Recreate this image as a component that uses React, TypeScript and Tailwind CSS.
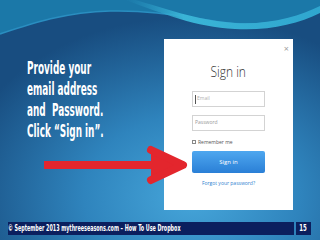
import React from "react";

function Background() {
  return (
    <svg className="absolute inset-0" width="320" height="240" viewBox="0 0 320 240">
      <defs>
        <radialGradient id="bg" cx="0.6" cy="0.82" r="0.75">
          <stop offset="0" stopColor="#46a6da" />
          <stop offset="0.45" stopColor="#2f84bd" />
          <stop offset="1" stopColor="#184d80" />
        </radialGradient>
        <linearGradient id="band" x1="0" y1="0" x2="1" y2="0">
          <stop offset="0" stopColor="#2a9cc8" stopOpacity="0" />
          <stop offset="0.3" stopColor="#3ab4d6" />
          <stop offset="1" stopColor="#2fa6cf" />
        </linearGradient>
      </defs>
      <rect width="320" height="240" fill="url(#bg)" />
      <path d="M0,0 H320 V8 C290,22 255,27 220,22 C180,16 150,10 110,11 C65,12 30,24 0,34 Z" fill="#1b78a8" />
      <path d="M0,34 C30,24 65,12 110,11 C150,10 180,16 220,22 C255,27 290,22 320,8" fill="none" stroke="#2a8ec0" strokeWidth="1.5" />
      <path d="M135,0 C165,8 195,20 235,23 C270,25 300,16 320,6 L320,13 C298,24 268,31 235,29 C195,27 165,14 125,0 Z" fill="url(#band)" />
    </svg>
  );
}

function Arrow() {
  return (
    <svg className="absolute left-0 top-0" width="320" height="240" viewBox="0 0 320 240">
      <line x1="44" y1="165" x2="172" y2="165" stroke="#e3262d" strokeWidth="8" />
      <polygon points="151,150 186,165 151,180" fill="#e3262d" />
      <polyline points="151,150 183,165 151,180" fill="none" stroke="#e3262d" strokeWidth="8" strokeLinecap="round" strokeLinejoin="round" />
    </svg>
  );
}

export default function App() {
  const cond = { fontFamily: '"DejaVu Sans Condensed", "DejaVu Sans", sans-serif' };
  return (
    <div className="relative w-[320px] h-[240px] overflow-hidden bg-[#1e5e90]">
      <Background />
      <div className="relative flex flex-col h-full">
        <div className="flex h-[222px]">
          <div className="w-[164px] pl-[27px] pt-[57px] text-white font-bold" style={cond}>
            <div className="origin-left scale-x-[0.55] whitespace-nowrap text-[18px] leading-[21px]">
              <div>Provide your</div>
              <div>email address</div>
              <div>and&nbsp; Password.</div>
              <div>Click “Sign in”.</div>
            </div>
          </div>
          <div
            className="relative mt-[39px] w-[129px] h-[171px] bg-white flex flex-col items-center"
            style={{ fontFamily: '"Open Sans", "Liberation Sans", sans-serif' }}
          >
            <div className="absolute top-[5px] right-[4px] text-[9px] leading-[10px] text-[#a0a0a0]">×</div>
            <div className="mt-[22px] h-[20px] text-[15px] leading-[20px] font-light text-[#333] origin-center scale-x-[0.8]">
              Sign in
            </div>
            <div className="mt-[10px] w-[73px] h-[16px] border border-[#d3d3d3] flex items-center pl-[2px]">
              <div className="w-px h-[9px] bg-[#555]" />
              <span className="text-[5px] text-[#b0b0b0] ml-[1px]">Email</span>
            </div>
            <div className="mt-[8px] w-[73px] h-[16px] border border-[#d3d3d3] flex items-center pl-[2px]">
              <span className="text-[5px] text-[#999]">Password</span>
            </div>
            <div className="mt-[8px] w-[73px] flex items-center gap-[2px]">
              <div className="w-[4px] h-[4px] border border-[#888]" />
              <span className="text-[5px] leading-[6px] text-[#555]">Remember me</span>
            </div>
            <div className="mt-[6px] w-[73px] h-[22px] rounded-[2px] bg-gradient-to-b from-[#4ea7ef] to-[#2a7fd6] flex items-center justify-center">
              <span className="text-[6px] text-white">Sign in</span>
            </div>
            <div className="mt-[7px] text-[5px] leading-[6px] text-[#2f7fcf]">Forgot your password?</div>
          </div>
        </div>
        <div className="flex h-[13px] pl-[8px] gap-[2px]">
          <div className="w-[286px] h-full bg-[#0b1f5e] flex items-center overflow-hidden">
            <div
              className="origin-left scale-x-[0.67] whitespace-nowrap text-[8px] leading-[10px] font-bold text-white"
              style={cond}
            >
              © September 2013 mythreeseasons.com – How To Use Dropbox
            </div>
          </div>
          <div className="w-[15px] h-full bg-[#0b1f5e] flex items-center justify-center">
            <span className="text-[8px] leading-[10px] font-bold text-white origin-center scale-x-[0.75]" style={cond}>15</span>
          </div>
        </div>
      </div>
      <Arrow />
    </div>
  );
}
